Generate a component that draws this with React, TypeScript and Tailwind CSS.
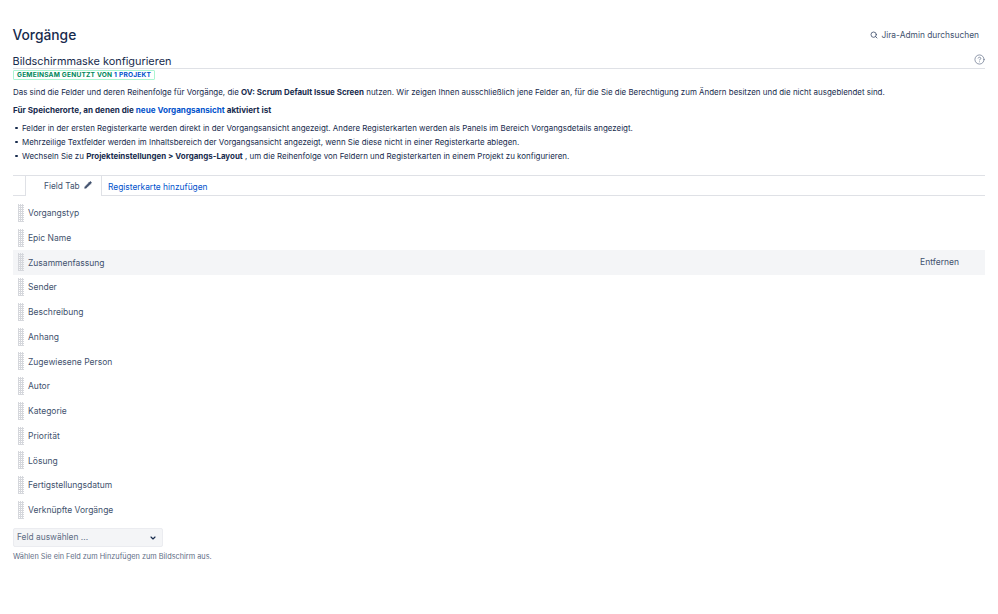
import { Search, CircleHelp, Pencil, ChevronDown } from 'lucide-react'

const FIELDS = [
  'Vorgangstyp',
  'Epic Name',
  'Zusammenfassung',
  'Sender',
  'Beschreibung',
  'Anhang',
  'Zugewiesene Person',
  'Autor',
  'Kategorie',
  'Priorität',
  'Lösung',
  'Fertigstellungsdatum',
  'Verknüpfte Vorgänge',
]

function DragHandle() {
  return (
    <div className="w-[6px] h-[18px] shrink-0 bg-[repeating-linear-gradient(0deg,#d5d7dc_0,#d5d7dc_1px,transparent_1px,transparent_2px),repeating-linear-gradient(90deg,#d5d7dc_0,#d5d7dc_1px,transparent_1px,transparent_2px)]" />
  )
}

function Bullet({ children }: { children: React.ReactNode }) {
  return (
    <li className="flex items-center">
      <span className="ml-[2px] mr-[4.5px] size-[2.5px] shrink-0 rounded-full bg-[#172b4d]" />
      <span>{children}</span>
    </li>
  )
}

export default function App() {
  return (
    <div className="w-[998px] h-[614px] bg-white px-[13px] font-['Inter','Liberation_Sans',sans-serif] text-[#172b4d] overflow-hidden">
      {/* page header */}
      <div className="flex items-center justify-between h-[54px] pt-[15px]">
        <h1 className="-ml-[0.5px] text-[13.8px] leading-[20px] font-medium">Vorgänge</h1>
        <div className="flex items-center gap-[3px] pr-[6px] pt-[2px] text-[8.4px] text-[#42526e]">
          <Search size={8} strokeWidth={2.5} />
          <span>Jira-Admin durchsuchen</span>
        </div>
      </div>

      {/* section title */}
      <div className="flex items-center justify-between h-[15px] border-b border-[#dfe1e6]">
        <h2 className="-ml-[0.5px] text-[10.9px] leading-[14px]">Bildschirmmaske konfigurieren</h2>
        <CircleHelp size={11} strokeWidth={1.5} className="text-[#5e6c84] mb-[3px]" />
      </div>
      <div className="mt-[1px] flex w-fit items-center h-[10px] px-[3px] rounded-[1px] border border-[#abf5d1] text-[6.6px] font-bold tracking-[0.2px] leading-none">
        <span className="text-[#00875a]">GEMEINSAM GENUTZT VON&nbsp;</span>
        <span className="text-[#0052cc]">1 PROJEKT</span>
      </div>

      <p className="mt-[6px] text-[7.95px] leading-[12px]">
        Das sind die Felder und deren Reihenfolge für Vorgänge, die <b>OV: Scrum Default Issue Screen</b> nutzen. Wir
        zeigen Ihnen ausschließlich jene Felder an, für die Sie die Berechtigung zum Ändern besitzen und die nicht
        ausgeblendet sind.
      </p>
      <p className="mt-[6px] text-[8.1px] leading-[12px] font-bold">
        Für Speicherorte, an denen die <span className="text-[#0052cc]">neue Vorgangsansicht</span> aktiviert ist
      </p>
      <ul className="mt-[5px] text-[7.95px] leading-[14px]">
        <Bullet>Felder in der ersten Registerkarte werden direkt in der Vorgangsansicht angezeigt. Andere Registerkarten werden als Panels im Bereich Vorgangsdetails angezeigt.</Bullet>
        <Bullet>Mehrzeilige Textfelder werden im Inhaltsbereich der Vorgangsansicht angezeigt, wenn Sie diese nicht in einer Registerkarte ablegen.</Bullet>
        <Bullet>
          Wechseln Sie zu <b>Projekteinstellungen &gt; Vorgangs-Layout</b> , um die Reihenfolge von Feldern und
          Registerkarten in einem Projekt zu konfigurieren.
        </Bullet>
      </ul>

      {/* tabs */}
      <div className="mt-[12px] flex items-stretch h-[21px] border-t border-b border-[#dfe1e6] pl-[12px]">
        <div className="flex items-center gap-[4px] w-[77px] pl-[18px] -mb-px bg-white border-x border-[#dfe1e6] text-[8.3px] text-[#42526e]">
          Field Tab
          <Pencil size={8} fill="#42526e" className="mb-[2px]" />
        </div>
        <div className="ml-[6px] flex items-center pt-[4px] text-[8.4px] text-[#0052cc]">Registerkarte hinzufügen</div>
      </div>

      {/* fields */}
      <div className="mt-[4.5px]">
        {FIELDS.map((name, i) => (
          <div
            key={name}
            className={`flex items-center h-[24.75px] pl-[5px] pr-[26px] gap-[4px] text-[8.5px] text-[#42526e] ${i === 2 ? 'bg-[#f4f5f7]' : ''}`}
          >
            <DragHandle />
            <span className="flex-1 pt-[1px]">{name}</span>
            {i === 2 && <span>Entfernen</span>}
          </div>
        ))}
      </div>

      {/* add field */}
      <div className="mt-[6px] flex items-center justify-between w-[150px] h-[19px] pl-[3px] pr-[5px] rounded-[2px] bg-[#f4f5f7] border border-[#ebecf0] text-[8.4px] text-[#5e6c84]">
        Feld auswählen ...
        <ChevronDown size={8} strokeWidth={3.5} className="text-[#172b4d]" />
      </div>
      <div className="mt-[5px] text-[7.35px] leading-[10px] text-[#5e6c84]">
        Wählen Sie ein Feld zum Hinzufügen zum Bildschirm aus.
      </div>
    </div>
  )
}
